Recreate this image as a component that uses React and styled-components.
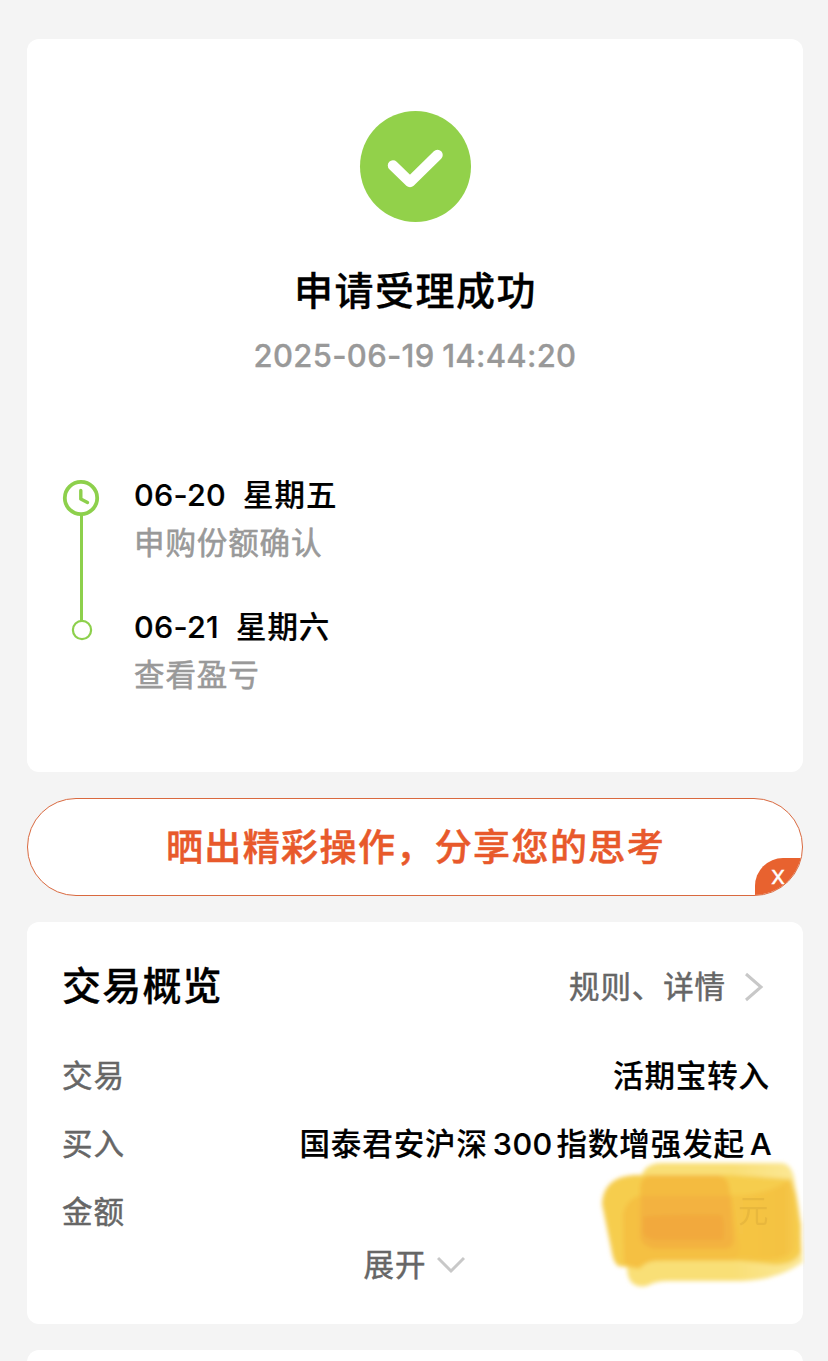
import React from 'react'
import styled, { createGlobalStyle } from 'styled-components'

const GlobalStyle = createGlobalStyle`
body {
  margin: 0;
  background: #f4f4f4;
  font-family: Inter, "Noto Sans CJK SC", sans-serif;
  color: #000;
}
* { box-sizing: border-box; }
`

const Page = styled.main`
display: flex;
flex-direction: column;
gap: 26px;
height: 1361px;
padding: 39px 25px 0 27px;
overflow: hidden;
`
const Card = styled.section`
flex: none;
height: ${p => p.$height}px;
border-radius: 12px;
background: #fff;
`
const ResultCard = styled(Card)`
display: flex;
flex-direction: column;
align-items: center;
padding-top: 71px;
`
const Title = styled.h1`
margin: 39px 0 0;
padding-left: 1px;
font-size: 39px;
line-height: 60px;
font-weight: 500;
letter-spacing: 1.5px;
-webkit-text-stroke: 0.3px #000;
`
const Time = styled.div`
margin-top: 15px;
font-size: 31px;
line-height: 40px;
font-weight: 500;
letter-spacing: 0.3px;
word-spacing: -1px;
color: #999;
-webkit-text-stroke: 0.3px #999;
`
const Timeline = styled.div`
display: flex;
align-self: stretch;
gap: 34px;
margin-top: 95px;
padding-left: 35px;
`
const Rail = styled.svg`
width: 38px;
height: 170px;
margin-top: 8px;
`
const Steps = styled.div`
display: flex;
flex-direction: column;
gap: 36px;
`
const StepDate = styled.div`
display: flex;
gap: 17px;
font-size: 30.5px;
line-height: 48px;
font-weight: 500;
letter-spacing: 0.9px;
-webkit-text-stroke: 0.2px #000;
`
const DateNum = styled.span`
letter-spacing: 0.3px;
`
const StepText = styled.div`
font-size: 30.5px;
line-height: 48px;
letter-spacing: 0.9px;
color: #999;
-webkit-text-stroke: 0.6px #999;
`
const Banner = styled.div`
position: relative;
flex: none;
display: flex;
align-items: center;
justify-content: center;
height: 98px;
padding: 0 0 4px 1px;
border: 1px solid #d9693f;
border-radius: 49px;
background: #fff;
overflow: hidden;
color: #e8592b;
font-size: 37px;
font-weight: 500;
letter-spacing: 1.4px;
-webkit-text-stroke: 0.5px #e8592b;
`
const CloseTag = styled.button`
position: absolute;
right: -1px;
bottom: -1px;
width: 48px;
height: 38px;
padding: 0 2px 6px 0;
border: 0;
border-radius: 28px 0 0 0;
background: #e8622f;
color: #fff;
font-family: "Open Sans", sans-serif;
font-size: 26px;
line-height: 30px;
-webkit-text-stroke: 0.4px #fff;
`
const OverviewCard = styled(Card)`
position: relative;
padding: 36px 32px 0 35px;
`
const CardHead = styled.div`
display: flex;
align-items: center;
justify-content: space-between;
height: 56px;
margin-bottom: 26px;
`
const CardTitle = styled.h2`
margin: 0;
font-size: 39px;
line-height: 56px;
font-weight: 500;
letter-spacing: 1.2px;
-webkit-text-stroke: 0.3px #000;
`
const RulesLink = styled.div`
display: flex;
align-items: center;
gap: 18px;
height: 54px;
margin-bottom: 2px;
padding-right: 7px;
font-size: 30.5px;
letter-spacing: 0.9px;
color: #666;
-webkit-text-stroke: 0.5px #666;
`
const Row = styled.div`
display: flex;
align-items: center;
justify-content: space-between;
height: 68px;
font-size: 30.5px;
letter-spacing: 0.9px;
white-space: nowrap;
`
const Label = styled.span`
color: #666;
-webkit-text-stroke: 0.5px #666;
`
const Value = styled.span`
padding-right: 1px;
font-weight: 500;
-webkit-text-stroke: 0.2px #000;
`
const Num = styled.span`
margin: 0 ${p => p.$last ? -2 : 4}px 0 5px;
letter-spacing: 0.4px;
`
const Expand = styled.div`
display: flex;
align-items: center;
justify-content: center;
gap: 11px;
height: 38px;
padding-right: 4px;
font-size: 30.5px;
letter-spacing: 0.9px;
color: #666;
-webkit-text-stroke: 0.5px #666;
`
const Chevron = styled.svg`
margin-top: 4px;
fill: none;
stroke: #c8c8c8;
stroke-width: 3;
`
// highlighter strokes hiding the amount
const Marker = styled.svg`
position: absolute;
right: -2px;
top: 228px;
width: 210px;
height: 145px;
`

const steps = [
  { date: '06-20', day: '星期五', text: '申购份额确认' },
  { date: '06-21', day: '星期六', text: '查看盈亏' }
]

const SuccessIcon = () => (
  <svg width="112" height="112" viewBox="-0.5 0 112 112">
    <circle cx="56" cy="56.5" r="55.5" fill="#92d14a" />
    <path d="M33.5 55.5L50.5 72L78 45" fill="none" stroke="#fff" strokeWidth="10.5" strokeLinecap="round" strokeLinejoin="round" />
  </svg>
)

const TimelineRail = () => (
  <Rail viewBox="0 0 38 170" fill="none" stroke="#8dd04c">
    <path d="M19.5 36V142" strokeWidth="3" />
    <circle cx="19" cy="19" r="16.2" strokeWidth="3.8" />
    <path d="M18.8 11.5V20L25.5 23.5" strokeWidth="3.4" strokeLinecap="round" strokeLinejoin="round" />
    <circle cx="20" cy="151" r="9.1" strokeWidth="2.2" />
  </Rail>
)

const Scribble = () => (
  <Marker viewBox="595 1150 210 145">
    <defs>
      <filter id="edge" x="-10%" y="-10%" width="120%" height="120%">
        <feGaussianBlur stdDeviation="2" />
      </filter>
      <linearGradient id="fade" x1="0" x2="1">
        <stop offset="0.6" stopColor="#f9df76" />
        <stop offset="1" stopColor="#fbe899" />
      </linearGradient>
      <linearGradient id="right" gradientUnits="userSpaceOnUse" x1="725" x2="802" y1="0" y2="0">
        <stop offset="0" stopColor="#f5c544" />
        <stop offset="0.78" stopColor="#f4c243" />
        <stop offset="1" stopColor="#f6cf54" />
      </linearGradient>
    </defs>
    <g filter="url(#edge)">
      <path d="M640 1182Q642 1163 662 1163H782Q791 1164 794 1177L799 1208L803 1262Q778 1280 742 1281H668Q656 1281 649 1285Q640 1289 632 1283Q627 1278 627 1266L640 1255Z" fill="url(#fade)" />
      <path d="M602 1204Q603 1177 634 1175H730L791 1179L796 1195L801 1225V1252Q796 1264 776 1265L740 1261H655Q647 1261 640 1269L618 1266Q613 1262 611 1248Z" fill="#f6cd4e" />
      <path d="M640 1195L745 1195Q767 1193 789 1181Q794 1190 794 1205L797 1240Q796 1258 770 1260H665Q646 1260 639 1268L624 1264L623 1215Q626 1200 640 1195Z" fill="url(#right)" />
      <path d="M640 1186Q642 1175 652 1175H716Q727 1176 729 1187L740 1245Q740 1259 730 1260H665Q645 1260 636 1268L624 1263L623 1215Q626 1199 640 1196Z" fill="#f5c042" />
      <path d="M641 1186Q642 1176 652 1175H718Q728 1177 729 1187L733 1238Q733 1248 725 1249H658Q641 1248 640 1235Z" fill="#f4b941" opacity="0.8" />
      <path d="M641 1196H731L734 1238Q734 1249 724 1249H658Q641 1248 640 1235Z" fill="#f3b03e" opacity="0.8" />
      <path d="M643 1217Q665 1214 722 1215Q725 1226 723 1240H656Q642 1238 643 1229Z" fill="#f1a53b" opacity="0.65" />
    </g>
    <text x="738" y="1222" fontSize="30.5" fill="#cf9f35" opacity="0.32">元</text>
  </Marker>
)

const App = () => (
  <>
    <GlobalStyle />
    <Page>
      <ResultCard $height={733}>
        <SuccessIcon />
        <Title>申请受理成功</Title>
        <Time>2025-06-19 14:44:20</Time>
        <Timeline>
          <TimelineRail />
          <Steps>
            {steps.map(step => (
              <div key={step.date}>
                <StepDate><DateNum>{step.date}</DateNum><span>{step.day}</span></StepDate>
                <StepText>{step.text}</StepText>
              </div>
            ))}
          </Steps>
        </Timeline>
      </ResultCard>

      <Banner>
        晒出精彩操作，分享您的思考
        <CloseTag>x</CloseTag>
      </Banner>

      <OverviewCard $height={402}>
        <CardHead>
          <CardTitle>交易概览</CardTitle>
          <RulesLink>
            规则、详情
            <Chevron width="20" height="30" viewBox="0 0 20 30"><path d="M2 2L17 15L2 28" /></Chevron>
          </RulesLink>
        </CardHead>
        <Row>
          <Label>交易</Label>
          <Value>活期宝转入</Value>
        </Row>
        <Row>
          <Label>买入</Label>
          <Value>国泰君安沪深<Num>300</Num>指数增强发起<Num $last>A</Num></Value>
        </Row>
        <Row>
          <Label>金额</Label>
        </Row>
        <Expand>
          展开
          <Chevron width="28" height="18" viewBox="0 0 28 18"><path d="M1 2L14 15L27 2" /></Chevron>
        </Expand>
        <Scribble />
      </OverviewCard>

      <Card $height={60} />
    </Page>
  </>
)

export default App
